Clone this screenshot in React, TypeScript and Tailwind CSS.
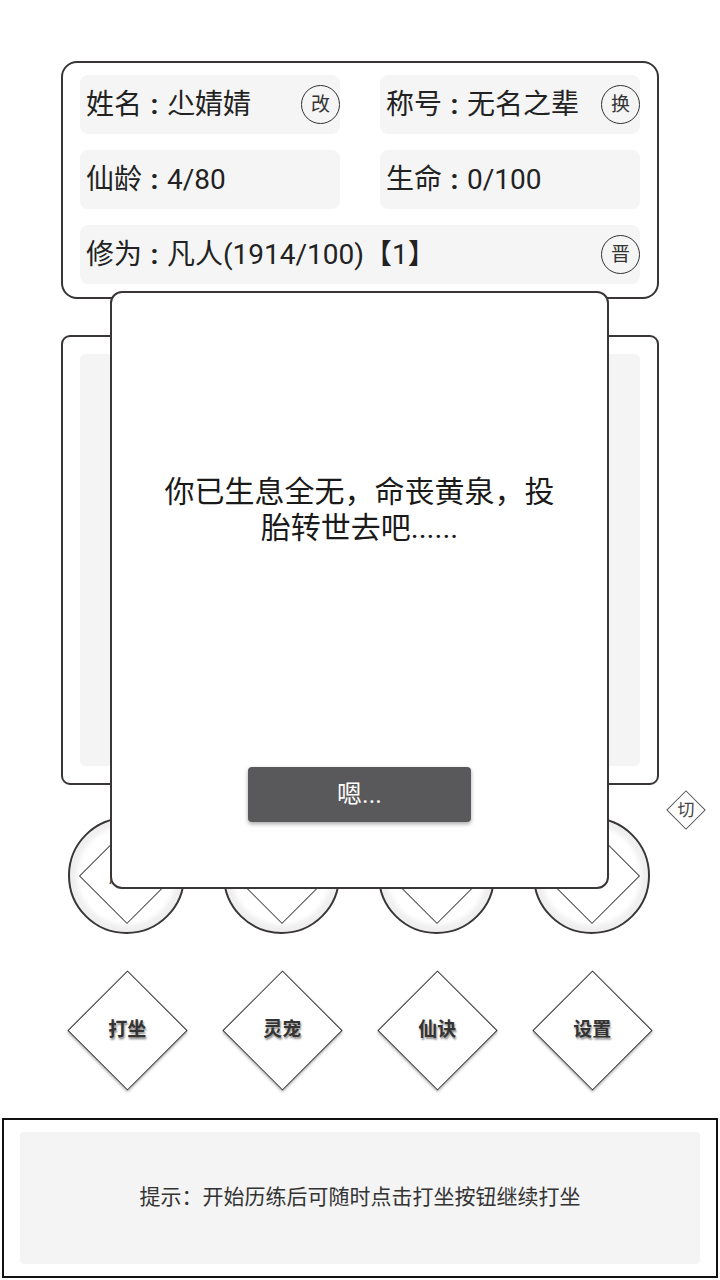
const stats = [
  { label: '姓名', value: '尐婧婧', action: '改' },
  { label: '称号', value: '无名之辈', action: '换' },
  { label: '仙龄', value: '4/80' },
  { label: '生命', value: '0/100' },
]

const wheels = ['历练', '背包', '商店', '排行']
const menu = ['打坐', '灵宠', '仙诀', '设置']

function RoundButton({ text }: { text: string }) {
  return (
    <span className="flex h-[39px] w-[39px] shrink-0 items-center justify-center rounded-full border-[1.5px] border-[#333] text-[19px] leading-none text-[#333]">
      {text}
    </span>
  )
}

function Field({ label, value }: { label: string; value: string }) {
  return (
    <span className="whitespace-nowrap">
      {label}
      <span className="inline-block w-[25px] text-center font-bold">:</span>
      {value}
    </span>
  )
}

export default function App() {
  return (
    <div className="relative h-[1280px] w-[720px] overflow-hidden bg-white font-['Roboto','Noto_Sans_CJK_SC',sans-serif] text-[#222]">
      <div className="px-[61px] pt-[61px]">
        {/* character info */}
        <section className="grid h-[238px] grid-cols-2 content-start gap-x-[40px] gap-y-[16px] rounded-[16px] border-2 border-[#3a3636] px-[17px] pt-[12px]">
          {stats.map((s) => (
            <div key={s.label} className="flex h-[59px] items-center justify-between rounded-[8px] bg-[#f5f5f5] pl-[6px] text-[28px]">
              <Field label={s.label} value={s.value} />
              {s.action && <RoundButton text={s.action} />}
            </div>
          ))}
          <div className="col-span-2 flex h-[59px] items-center justify-between rounded-[8px] bg-[#f5f5f5] pl-[6px] text-[28px]">
            <Field label="修为" value="凡人(1914/100)【1】" />
            <RoundButton text="晋" />
          </div>
        </section>

        {/* log area */}
        <section className="mt-[36px] h-[450px] rounded-[9px] border-2 border-[#3a3636] p-[17px]">
          <div className="h-full rounded-[6px] bg-[#f4f4f4]" />
        </section>
      </div>

      {/* round action buttons */}
      <div className="mt-[32px] flex gap-[38px] pl-[68px]">
        {wheels.map((w) => (
          <div key={w} className="flex h-[117px] w-[117px] items-center justify-center rounded-full border-2 border-[#3a3636] bg-white shadow-[inset_0_0_5px_7px_#efefef]">
            <div className="flex h-[68px] w-[68px] rotate-45 items-center justify-center border-[1.5px] border-[#444] bg-white">
              <span className="-rotate-45 text-[18px] text-[#444]">{w}</span>
            </div>
          </div>
        ))}
      </div>

      {/* main menu */}
      <div className="mt-[36px] flex gap-[35px] pl-[67px]">
        {menu.map((m) => (
          <div key={m} className="flex h-[120px] w-[120px] items-center justify-center">
            <div className="flex h-[85px] w-[85px] rotate-45 items-center justify-center border-[1.5px] border-[#333] bg-white shadow-[1px_1px_3px_rgba(0,0,0,0.35)]">
              <span className="-rotate-45 text-[19px] font-bold text-[#333] [text-shadow:1px_2px_2px_rgba(0,0,0,0.45)]">{m}</span>
            </div>
          </div>
        ))}
      </div>

      {/* tip bar */}
      <div className="mx-[2px] mt-[28px] h-[160px] border-2 border-[#111] px-[16px] py-[12px]">
        <div className="flex h-full items-center justify-center rounded-[4px] bg-[#f4f4f4] text-[21px] text-[#333]">
          提示：开始历练后可随时点击打坐按钮继续打坐
        </div>
      </div>

      {/* switch */}
      <div className="absolute left-[672px] top-[796px] flex h-[28px] w-[28px] rotate-45 items-center justify-center border-[1.5px] border-[#555] bg-white">
        <span className="-rotate-45 text-[17px] leading-none text-[#444]">切</span>
      </div>

      {/* death dialog */}
      <div className="absolute left-[110px] top-[291px] flex h-[598px] w-[499px] flex-col items-center rounded-[12px] border-2 border-[#3a3636] bg-white px-[48px] pt-[181px]">
        <p className="text-center text-[30px] leading-[36px] text-[#1a1a1a]">你已生息全无，命丧黄泉，投胎转世去吧......</p>
        <button className="mb-[65px] mt-auto flex h-[55px] w-[223px] items-center justify-center rounded-[4px] bg-[#59595b] text-[25px] text-white shadow-[0_2px_4px_rgba(0,0,0,0.35)]">
          嗯...
        </button>
      </div>
    </div>
  )
}
